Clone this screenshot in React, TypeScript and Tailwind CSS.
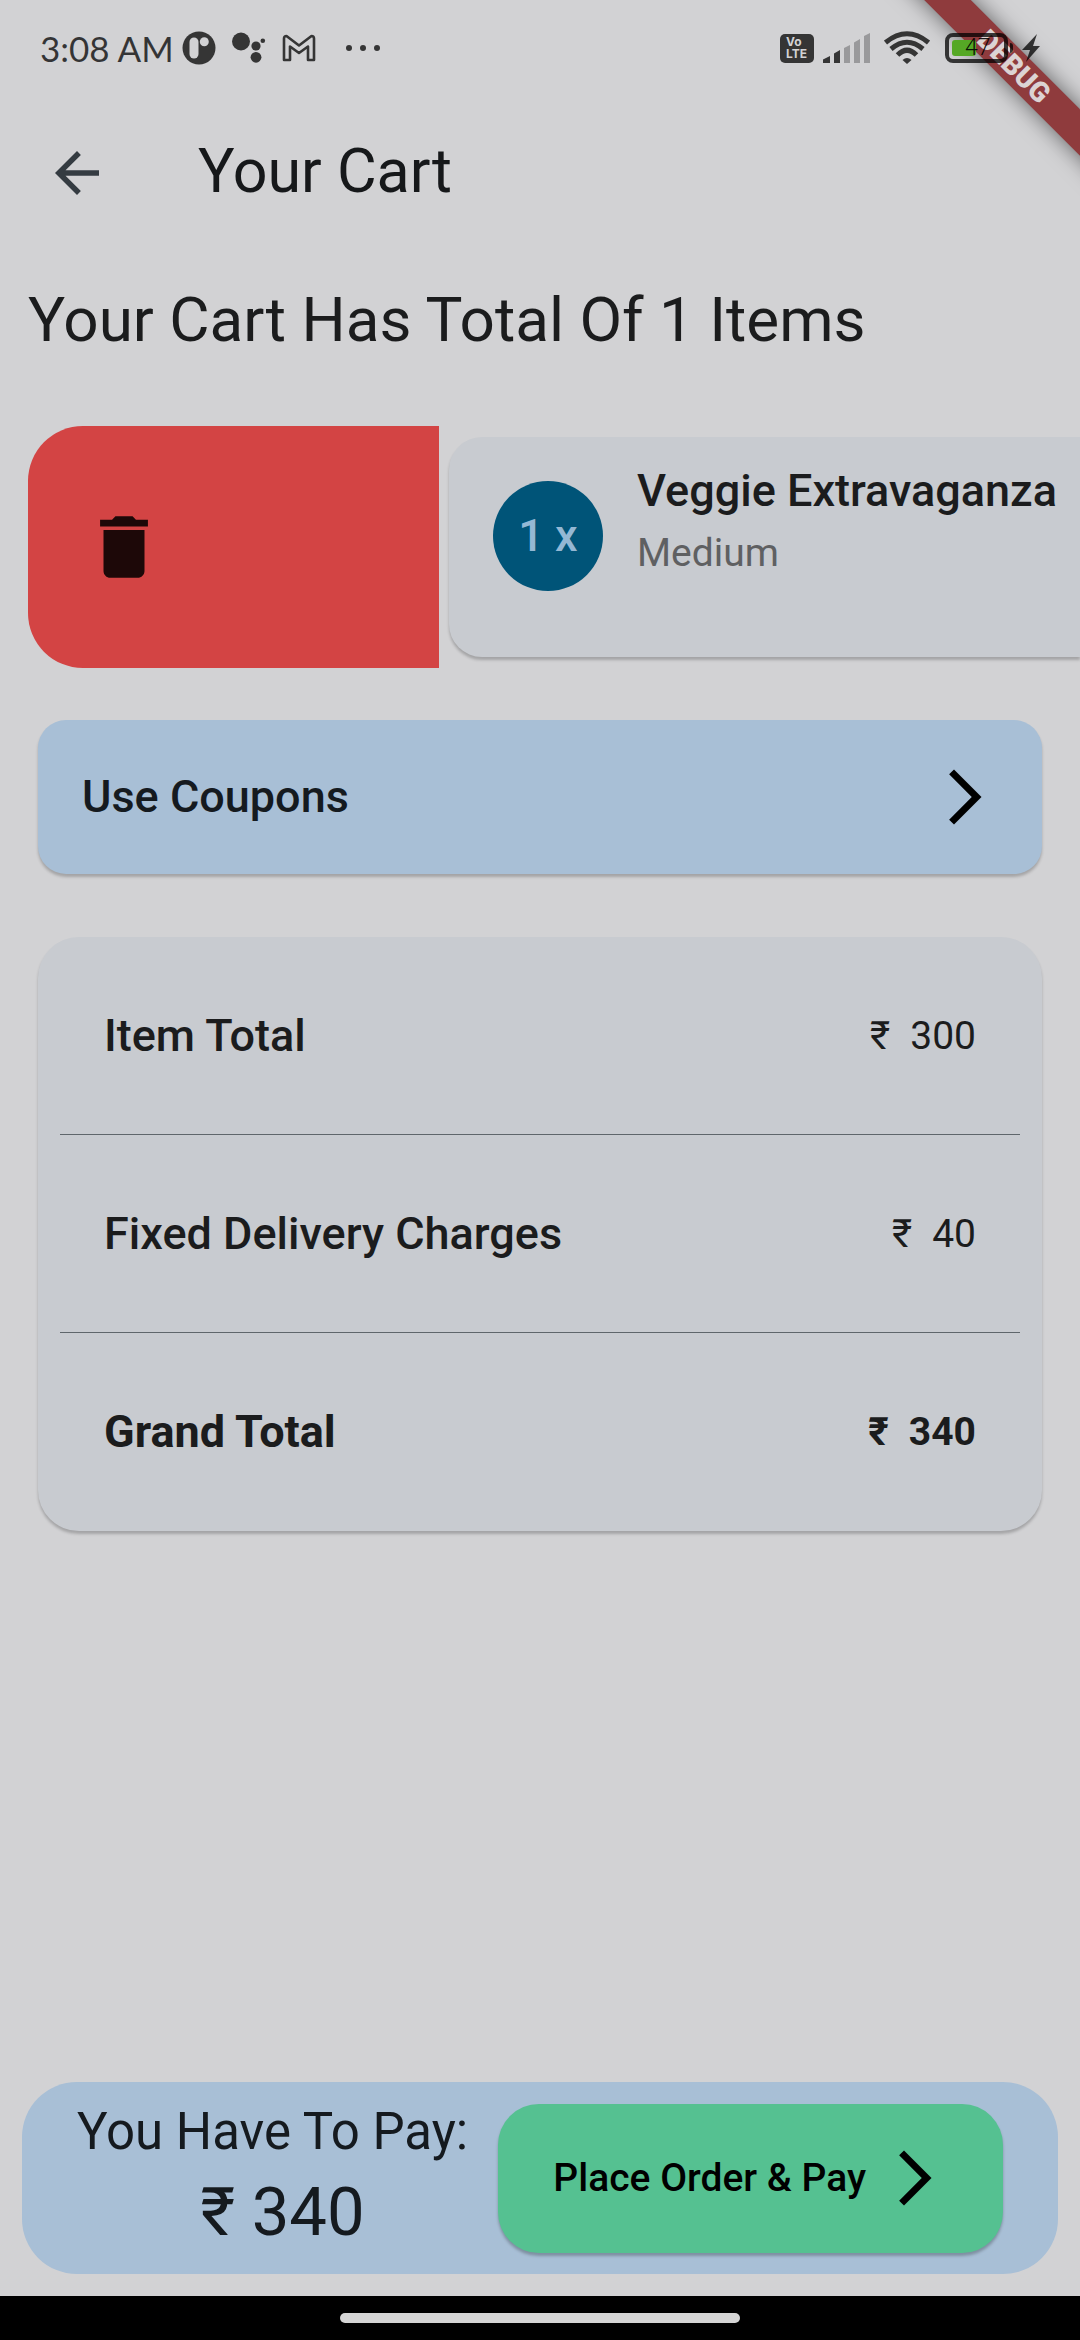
import type { ReactNode } from "react";

function ForwardIcon() {
  return (
    <svg viewBox="0 0 24 24" className="size-[66px] shrink-0" fill="currentColor" aria-hidden="true">
      <path d="M6.23 20.23 8 22l10-10L8 2 6.23 3.77 14.46 12z" />
    </svg>
  );
}

function StatusBar() {
  return (
    <header className="relative z-10 flex h-24 items-center justify-between px-10 text-black/75">
      <div className="flex items-center">
        <span className="w-[142px] font-['Lato'] text-[35px] leading-10 whitespace-nowrap">3:08 AM</span>
        <svg viewBox="0 0 34 34" className="size-[34px]" aria-hidden="true">
          <circle cx="17" cy="17" r="16.5" fill="#353535" />
          <rect x="7.500" y="6.500" width="9" height="21" rx="4.500" fill="#d2d2d4" />
          <circle cx="22.300" cy="10.800" r="4.500" fill="#d2d2d4" />
        </svg>
        <svg viewBox="0 0 34 32" className="ml-4 h-8 w-[34px]" fill="currentColor" aria-hidden="true">
          <circle cx="9" cy="9.5" r="9" />
          <circle cx="24" cy="14" r="4.6" />
          <circle cx="30.8" cy="8.8" r="2.3" />
          <circle cx="24" cy="25.3" r="5.4" />
        </svg>
        <svg
          viewBox="0 0 34 28"
          className="ml-4 h-7 w-[34px]"
          fill="none"
          stroke="#353535"
          strokeWidth="2.6"
          strokeLinejoin="round"
          aria-hidden="true"
        >
          <path d="M2 4.5Q2 2 4.5 2L17 11.5 29.500 2Q32 2 32 4.500V26H26V12.500L17 19 8 12.500V26H2Z" />
        </svg>
        <svg viewBox="0 0 34 8" className="ml-[30px] h-2 w-[34px]" fill="currentColor" aria-hidden="true">
          <circle cx="3" cy="4" r="3" />
          <circle cx="17" cy="4" r="3" />
          <circle cx="31" cy="4" r="3" />
        </svg>
      </div>
      <div className="flex items-center">
        <span className="flex h-[29px] w-[34px] flex-col justify-center rounded-[5px] bg-[#353535] pl-[6px] font-['Inter'] text-[12px] leading-3 font-bold text-[#d2d2d4]">
          <span>Vo</span>
          <span>LTE</span>
        </span>
        <svg viewBox="0 0 48 30" className="ml-[9px] h-[30px] w-12" aria-hidden="true">
          <path d="M0 30V26.5L7 23V30Z" fill="#353535" />
          <path d="M11 30V20.5L17 17V30Z" fill="#353535" />
          <path d="M21 30V15L27 12V30Z" fill="#99999b" />
          <path d="M31 30V9.5L37 6V30Z" fill="#99999b" />
          <path d="M41 30V3L47 0V30Z" fill="#99999b" />
        </svg>
        <svg
          viewBox="0 0 46 34"
          className="ml-[13px] h-[34px] w-[46px]"
          fill="none"
          stroke="#353535"
          strokeWidth="5"
          aria-hidden="true"
        >
          <path d="M1.500 11.500Q23-6 44.500 11.500" />
          <path d="M7 18Q23 4.500 39 18" />
          <path d="M13.500 24Q23 14.500 32.500 24" />
          <path d="M18.500 29Q23 25 27.500 29L23 33Z" fill="#353535" stroke="none" />
        </svg>
        <span className="ml-[15px] flex h-[30px] w-[63px] items-center rounded-lg border-4 border-black/75 pl-[3px]">
          <span className="flex h-4 w-6 items-center rounded-[3px] bg-[#55a825] pl-[13px] font-['Roboto'] text-[23px] leading-4 font-light text-black/90">
            47
          </span>
        </span>
        <span className="ml-[2px] h-[10px] w-[3px] rounded-r-sm bg-black/75" />
        <svg viewBox="0 0 18 28" className="ml-[9px] h-7 w-[18px]" fill="currentColor" aria-hidden="true">
          <path d="M15 0 0 16H8L4 28 18 12H11Z" />
        </svg>
      </div>
    </header>
  );
}

function DebugBanner() {
  return (
    <div className="pointer-events-none absolute top-0 right-0 size-[200px] overflow-hidden">
      <div className="absolute top-[50px] -right-[84px] flex h-[33px] w-[300px] rotate-45 items-center justify-center bg-[#8f3b3d] shadow-[0_0_22px_rgba(0,0,0,0.55)]">
        <span className="font-['Roboto'] text-[28px] leading-8 font-black text-[#dcd3d3]">DEBUG</span>
      </div>
    </div>
  );
}

function SummaryRow({ label, amount, total = false }: { label: string; amount: string; total?: boolean }) {
  return (
    <div
      className={
        total
          ? "flex h-[198px] items-center justify-between px-11 font-bold"
          : "flex h-[198px] items-center justify-between border-b border-[#5f666b] px-11"
      }
    >
      <dt className={total ? "text-[45px] leading-[52px]" : "text-[45px] leading-[52px] font-medium"}>{label}</dt>
      <dd className="flex items-baseline gap-5 text-[39px] leading-[52px]">
        <span>₹</span>
        <span>{amount}</span>
      </dd>
    </div>
  );
}

function Card({ className, children }: { className: string; children: ReactNode }) {
  return <div className={`bg-[#c8cbd0] shadow-[0_3px_3px_rgba(0,0,0,0.22)] ${className}`}>{children}</div>;
}

export default function App() {
  return (
    <div className="relative flex min-h-screen flex-col overflow-hidden bg-[#d2d2d4] font-['Roboto',sans-serif] text-[#1b1c1d]">
      <StatusBar />
      <nav className="flex h-[154px] items-center pl-11">
        <button type="button" aria-label="Back" className="text-[#343b41]">
          <svg viewBox="0 0 24 24" className="size-[66px]" fill="currentColor" aria-hidden="true">
            <path d="M20 11H7.83l5.590-5.590L12 4l-8 8 8 8 1.410-1.410L7.830 13H20v-2z" />
          </svg>
        </button>
        <h1 className="mb-1 ml-[88px] text-[61px] leading-[72px] text-[#16181a]">Your Cart</h1>
      </nav>

      <main className="flex flex-1 flex-col">
        <h2 className="mt-[34px] ml-7 text-[62px] leading-[72px] whitespace-nowrap">Your Cart Has Total Of 1 Items</h2>

        <section
          className="mt-[70px] grid grid-cols-[minmax(0,411fr)_minmax(0,631fr)] items-center gap-[10px] pl-7"
          aria-label="Cart items"
        >
          <button
            type="button"
            aria-label="Delete item"
            className="flex h-[242px] items-center rounded-l-[55px] bg-[#d34444] pl-[55px] text-[#1d0808]"
          >
            <svg viewBox="0 0 24 24" className="size-[82px]" fill="currentColor" aria-hidden="true">
              <path d="M6 19c0 1.100.9 2 2 2h8c1.100 0 2-.9 2-2V7H6v12zM19 4h-3.500l-1-1h-5l-1 1H5v2h14V4z" />
            </svg>
          </button>
          <Card className="flex h-[220px] items-start rounded-l-[33px] pt-[24px] pl-11">
            <div className="mt-5 flex size-[110px] shrink-0 items-center justify-center rounded-full bg-[#005478] text-[45px] leading-[52px] font-medium text-[#94b8d4]">
              1 x
            </div>
            <div className="ml-[34px] whitespace-nowrap">
              <h3 className="text-[45px] leading-[60px] font-medium">Veggie Extravaganza</h3>
              <p className="text-[39px] leading-[64px] text-[#5f6062]">Medium</p>
            </div>
          </Card>
        </section>

        <button
          type="button"
          className="mx-[38px] mt-[52px] flex h-[154px] items-center justify-between rounded-[28px] bg-[#a8bfd6] px-11 text-[45px] leading-[52px] font-medium text-[#151a1f] shadow-[0_3px_3px_rgba(0,0,0,0.22)]"
        >
          Use Coupons
          <span className="text-black">
            <ForwardIcon />
          </span>
        </button>

        <Card className="mx-[38px] mt-[63px] rounded-[41px] px-[22px]">
          <dl>
            <SummaryRow label="Item Total" amount="300" />
            <SummaryRow label="Fixed Delivery Charges" amount="40" />
            <SummaryRow label="Grand Total" amount="340" total />
          </dl>
        </Card>
      </main>

      <footer className="mx-[22px] mb-[22px] flex h-[192px] items-center justify-between rounded-[55px] bg-[#a8bfd6] px-[55px] text-[#151a1f]">
        <div className="flex flex-col items-center pb-2 whitespace-nowrap">
          <span className="text-[51px] leading-[76px]">You Have To Pay:</span>
          <span className="pl-5 text-[67px] leading-[84px]">₹ 340</span>
        </div>
        <button
          type="button"
          className="flex h-[149px] items-center gap-4 rounded-[41px] bg-[#55c191] px-[55px] text-[39px] leading-[52px] font-medium whitespace-nowrap text-black shadow-[0_3px_3px_rgba(0,0,0,0.25)]"
        >
          Place Order &amp; Pay
          <ForwardIcon />
        </button>
      </footer>

      <div className="flex h-11 items-center justify-center bg-black">
        <div className="h-[10px] w-[37%] rounded-full bg-[#d5d5d5]" />
      </div>
      <DebugBanner />
    </div>
  );
}
